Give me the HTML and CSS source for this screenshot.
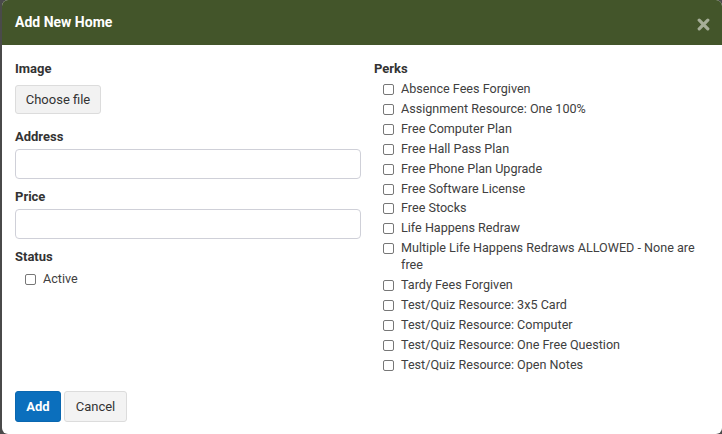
FILE: index.html
```html
<!DOCTYPE html>
<html>
<head>
<meta charset="utf-8">
<link rel="stylesheet" href="styles.css">
</head>
<body>
<div class="modal">
  <div class="modal-header">
    <h1 class="modal-title">Add New Home</h1>
    <button class="close" type="button" aria-label="Close">
      <svg width="13" height="13" viewBox="0 0 13 13"><path d="M2.2 2.2 L10.8 10.8 M10.8 2.2 L2.2 10.8" stroke="#a6ae98" stroke-width="3.2" stroke-linecap="round"/></svg>
    </button>
  </div>
  <div class="modal-body">
    <div class="col">
      <div class="group">
        <div class="label">Image</div>
        <button class="file-btn" type="button">Choose file</button>
      </div>
      <div class="group">
        <div class="label label-tight">Address</div>
        <input class="text-input" type="text">
      </div>
      <div class="group group-small">
        <div class="label label-tight">Price</div>
        <input class="text-input" type="text">
      </div>
      <div class="group group-small">
        <div class="label">Status</div>
        <label class="check status-check"><input type="checkbox"><span>Active</span></label>
      </div>
    </div>
    <div class="col">
      <div class="label perks-label">Perks</div>
      <ul class="perks">
        <li><label class="check"><input type="checkbox"><span>Absence Fees Forgiven</span></label></li>
        <li><label class="check"><input type="checkbox"><span>Assignment Resource: One 100%</span></label></li>
        <li><label class="check"><input type="checkbox"><span>Free Computer Plan</span></label></li>
        <li><label class="check"><input type="checkbox"><span>Free Hall Pass Plan</span></label></li>
        <li><label class="check"><input type="checkbox"><span>Free Phone Plan Upgrade</span></label></li>
        <li><label class="check"><input type="checkbox"><span>Free Software License</span></label></li>
        <li><label class="check"><input type="checkbox"><span>Free Stocks</span></label></li>
        <li><label class="check"><input type="checkbox"><span>Life Happens Redraw</span></label></li>
        <li><label class="check"><input type="checkbox"><span>Multiple Life Happens Redraws ALLOWED - None are free</span></label></li>
        <li><label class="check"><input type="checkbox"><span>Tardy Fees Forgiven</span></label></li>
        <li><label class="check"><input type="checkbox"><span>Test/Quiz Resource: 3x5 Card</span></label></li>
        <li><label class="check"><input type="checkbox"><span>Test/Quiz Resource: Computer</span></label></li>
        <li><label class="check"><input type="checkbox"><span>Test/Quiz Resource: One Free Question</span></label></li>
        <li><label class="check"><input type="checkbox"><span>Test/Quiz Resource: Open Notes</span></label></li>
      </ul>
    </div>
  </div>
  <div class="modal-footer">
    <button class="btn btn-primary" type="button">Add</button>
    <button class="btn btn-default" type="button">Cancel</button>
  </div>
</div>
</body>
</html>
```

FILE: styles.css
```css
* { box-sizing: border-box; }
html, body { margin: 0; padding: 0; }
body {
  background: #4a4a4a;
  font-family: Roboto, "Liberation Sans", sans-serif;
  color: #333;
  overflow: hidden;
  width: 722px;
  height: 434px;
}
.modal {
  margin-left: 2px;
  width: 720px;
  height: 434px;
  background: #fff;
  border-radius: 6px;
  display: flex;
  flex-direction: column;
  overflow: hidden;
}
.modal-header {
  height: 45px;
  flex: none;
  background: #43552a;
  display: flex;
  align-items: center;
  justify-content: space-between;
  padding: 0 12px 0 13px;
}
.modal-title {
  margin: 0;
  color: #fff;
  font-size: 14px;
  font-weight: 700;
  line-height: 18px;
  position: relative;
  top: -1px;
}
.close {
  border: 0;
  background: transparent;
  padding: 0;
  width: 13px;
  height: 13px;
  display: flex;
  position: relative;
  top: 2px;
}
.modal-body {
  flex: 1;
  display: grid;
  grid-template-columns: 346px 333px;
  column-gap: 13px;
  padding: 15px 0 0 13px;
  align-items: start;
}
.col { display: flex; flex-direction: column; }
.group { display: flex; flex-direction: column; align-items: flex-start; }
.group + .group { margin-top: 14px; }
.group + .group-small { margin-top: 9px; }
.label {
  font-size: 13px;
  font-weight: 700;
  line-height: 18px;
  color: #333;
  margin-bottom: 7px;
}
.label-tight { margin-bottom: 3px; }
.file-btn {
  font-family: inherit;
  font-size: 13px;
  color: #333;
  background: #f2f2f2;
  border: 1px solid #dcdcdc;
  border-radius: 3px;
  height: 29px;
  width: 86px;
  padding: 0;
}
.text-input {
  width: 346px;
  height: 30px;
  border: 1px solid #cfd0d8;
  border-radius: 4px;
  background: #fff;
  font-family: inherit;
  font-size: 13px;
}
.status-check { margin-top: -2px; margin-left: 10px; }
.perks-label { margin-bottom: 3px; }
.perks {
  list-style: none;
  margin: 0;
  padding: 0 0 0 9px;
}
.perks li { margin-bottom: 3px; }
.check {
  display: flex;
  align-items: flex-start;
  font-size: 12.6px;
  line-height: 16.9px;
  color: #404040;
}
.check input {
  appearance: none;
  -webkit-appearance: none;
  width: 11px;
  height: 11px;
  margin: 3px 7px 0 0;
  flex: none;
  border: 1px solid #777;
  border-radius: 2px;
  background: #fff;
}
.modal-footer {
  flex: none;
  display: flex;
  gap: 3px;
  padding: 0 0 12px 13px;
}
.btn {
  font-family: inherit;
  font-size: 13px;
  height: 31px;
  border-radius: 3px;
  padding: 0;
}
.btn-primary {
  width: 46px;
  background: #0b6fbd;
  border: 1px solid #0a67b0;
  color: #fff;
  font-weight: 700;
}
.btn-default {
  width: 63px;
  background: #f3f3f3;
  border: 1px solid #dcdcdc;
  color: #333;
}
```
